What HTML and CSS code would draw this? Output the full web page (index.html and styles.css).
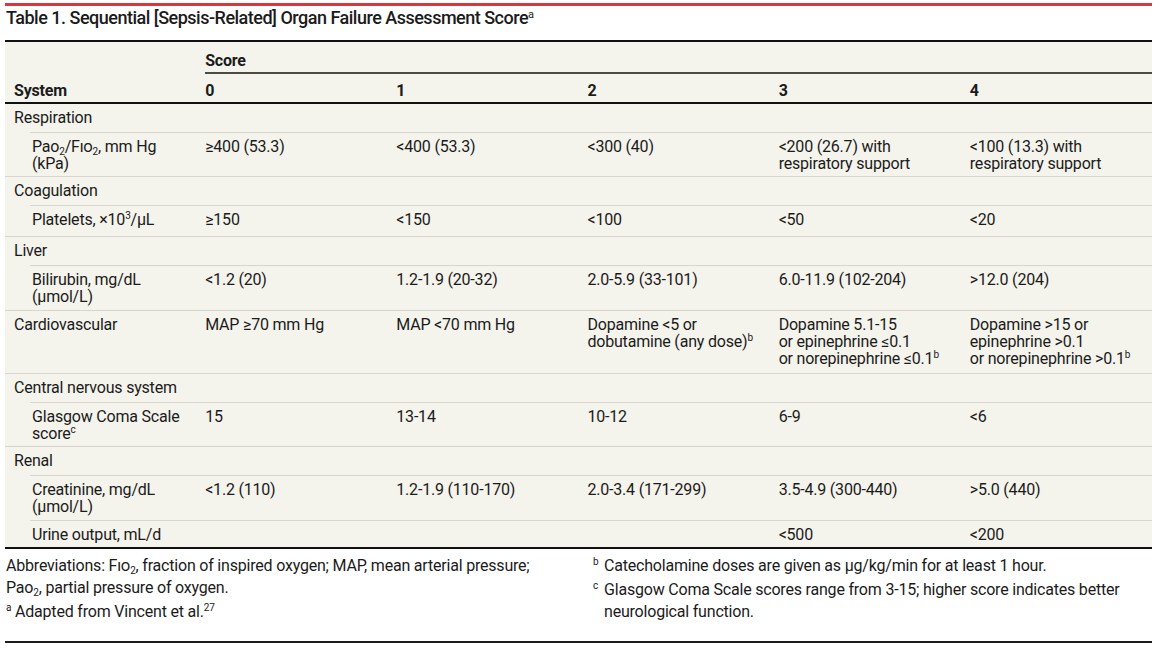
FILE: index.html
```html
<!DOCTYPE html>
<html lang="en">
<head>
<meta charset="utf-8">
<title>Table 1. SOFA Score</title>
<link rel="stylesheet" href="styles.css">
</head>
<body>
<div class="page">
  <div class="rule-red"></div>
  <h1 class="title">Table 1. Sequential [Sepsis-Related] Organ Failure Assessment Score<sup>a</sup></h1>
  <table class="sofa">
    <colgroup><col><col><col><col><col><col></colgroup>
    <thead>
      <tr class="hrow1">
        <th></th>
        <th colspan="5"><div class="score-head">Score</div></th>
      </tr>
      <tr class="hrow2">
        <th>System</th><th>0</th><th>1</th><th>2</th><th>3</th><th>4</th>
      </tr>
    </thead>
    <tbody>
      <tr class="cat"><td colspan="6" class="iline">Respiration</td></tr>
      <tr class="sub">
        <td>Pao<sub>2</sub>/F<span class="sc">io</span><sub>2</sub>, mm Hg<br>(kPa)</td>
        <td>≥400 (53.3)</td><td>&lt;400 (53.3)</td><td>&lt;300 (40)</td>
        <td>&lt;200 (26.7) with<br>respiratory support</td>
        <td>&lt;100 (13.3) with<br>respiratory support</td>
      </tr>
      <tr class="cat"><td colspan="6" class="iline">Coagulation</td></tr>
      <tr class="sub tall">
        <td>Platelets, ×10<sup>3</sup>/µL</td>
        <td>≥150</td><td>&lt;150</td><td>&lt;100</td><td>&lt;50</td><td>&lt;20</td>
      </tr>
      <tr class="cat"><td colspan="6" class="iline">Liver</td></tr>
      <tr class="sub loose">
        <td>Bilirubin, mg/dL<br>(µmol/L)</td>
        <td>&lt;1.2 (20)</td><td>1.2-1.9 (20-32)</td><td>2.0-5.9 (33-101)</td><td>6.0-11.9 (102-204)</td><td>&gt;12.0 (204)</td>
      </tr>
      <tr class="cat">
        <td>Cardiovascular</td>
        <td>MAP ≥70 mm Hg</td>
        <td>MAP &lt;70 mm Hg</td>
        <td>Dopamine &lt;5 or<br>dobutamine (any dose)<sup>b</sup></td>
        <td>Dopamine 5.1-15<br>or epinephrine ≤0.1<br>or norepinephrine ≤0.1<sup>b</sup></td>
        <td>Dopamine &gt;15 or<br>epinephrine &gt;0.1<br>or norepinephrine &gt;0.1<sup>b</sup></td>
      </tr>
      <tr class="cat"><td colspan="6" class="iline">Central nervous system</td></tr>
      <tr class="sub">
        <td>Glasgow Coma Scale<br>score<sup>c</sup></td>
        <td>15</td><td>13-14</td><td>10-12</td><td>6-9</td><td>&lt;6</td>
      </tr>
      <tr class="cat"><td colspan="6" class="iline">Renal</td></tr>
      <tr class="sub loose">
        <td class="iline">Creatinine, mg/dL<br>(µmol/L)</td>
        <td>&lt;1.2 (110)</td><td>1.2-1.9 (110-170)</td><td>2.0-3.4 (171-299)</td><td>3.5-4.9 (300-440)</td><td>&gt;5.0 (440)</td>
      </tr>
      <tr class="sub last">
        <td>Urine output, mL/d</td>
        <td></td><td></td><td></td><td>&lt;500</td><td>&lt;200</td>
      </tr>
    </tbody>
  </table>
  <div class="notes">
    <div class="notes-col left">
      <p>Abbreviations: F<span class="sc">io</span><sub>2</sub>, fraction of inspired oxygen; MAP, mean arterial pressure; Pao<sub>2</sub>, partial pressure of oxygen.</p>
      <p><sup class="lead">a</sup> Adapted from Vincent et al.<sup>27</sup></p>
    </div>
    <div class="notes-col hang">
      <p><span class="mark">b</span>Catecholamine doses are given as µg/kg/min for at least 1 hour.</p>
      <p><span class="mark">c</span>Glasgow Coma Scale scores range from 3-15; higher score indicates better neurological function.</p>
    </div>
  </div>
</div>
</body>
</html>
```
FILE: styles.css
```css
* { box-sizing: border-box; }

body {
  margin: 0;
  background: #ffffff;
  color: #1b1b1b;
  font-family: Roboto, "Noto Sans", "Liberation Sans", sans-serif;
}

.page {
  width: 1147px;
  margin-left: 5px;
  padding-top: 3px;
}

.rule-red {
  height: 3px;
  background: #d8383d;
}

.title {
  margin: 2px 0 12px 1px;
  font-size: 18px;
  line-height: 20px;
  font-weight: 500;
  letter-spacing: -0.5px;
}

.title sup {
  font-size: 11px;
  font-weight: 400;
}

sup {
  font-size: 10px;
  line-height: 1;
  vertical-align: baseline;
  position: relative;
  top: -6px;
}

sub {
  font-size: 10px;
  line-height: 1;
  vertical-align: baseline;
  position: relative;
  top: 3px;
}

.sofa {
  width: 100%;
  table-layout: fixed;
  border-collapse: separate;
  border-spacing: 0;
  background: #f4f3ec;
  border-top: 2px solid #111111;
  font-size: 16px;
  line-height: 17px;
  letter-spacing: -0.2px;
}

.sofa th {
  text-align: left;
  font-weight: 700;
  vertical-align: top;
}

.hrow1 th {
  padding: 10px 0 0 9px;
}

.score-head {
  padding-bottom: 3px;
  border-bottom: 2px solid #4b4b46;
}

.hrow2 th {
  padding: 8px 9px 3px;
  border-bottom: 2px solid #111111;
}

.sofa td {
  padding: 5px 9px 6px;
  vertical-align: top;
  border-bottom: 1px solid #d7d5ce;
}

.sofa tr.sub td {
  padding-bottom: 4px;
}

.sofa tr.tall td {
  padding-bottom: 8px;
}

.sofa tr.loose td {
  padding-bottom: 5px;
}

.sofa tr.sub td:first-child {
  padding-left: 27px;
}

.sofa td.iline {
  border-bottom-color: transparent;
  background-image: linear-gradient(#d7d5ce, #d7d5ce);
  background-repeat: no-repeat;
  background-origin: border-box;
  background-position: right bottom;
  background-size: calc(100% - 25px) 1px;
}

.sofa tr.last td {
  border-bottom: 2px solid #111111;
}

.sc {
  font-variant: small-caps;
}

.notes {
  display: grid;
  grid-template-columns: 587px 1fr;
  padding: 6px 0 16px 1px;
  border-bottom: 2px solid #1b1b1b;
  font-size: 16px;
  line-height: 22px;
  letter-spacing: -0.2px;
}

.notes .left {
  padding-right: 40px;
}

.notes p {
  margin: 0 0 2px;
}

.hang p {
  padding-left: 11px;
  text-indent: -11px;
}

.mark {
  display: inline-block;
  width: 11px;
  text-indent: 0;
  font-size: 10px;
  line-height: 1;
  position: relative;
  top: -6px;
}
```
